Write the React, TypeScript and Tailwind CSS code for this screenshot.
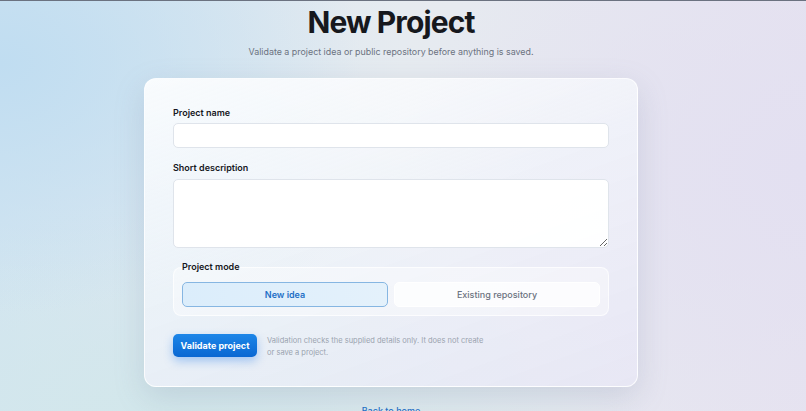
import React, { useState } from 'react';

export default function App() {
  const [mode, setMode] = useState<'idea' | 'repo'>('idea');

  return (
    <div className="min-h-screen w-full overflow-hidden border-t border-[#6b7280] font-['Inter','Noto_Sans',sans-serif] text-[#16181d] [background:radial-gradient(ellipse_45%_60%_at_0%_15%,#c0ddf1_0%,rgba(192,221,241,0)_100%),radial-gradient(ellipse_50%_70%_at_100%_40%,#e3e0f1_0%,rgba(227,224,241,0)_100%),radial-gradient(ellipse_60%_50%_at_20%_100%,#d2e7eb_0%,rgba(210,231,235,0)_100%),linear-gradient(90deg,#d3e5f1_0%,#e6ebf0_50%,#e6e3f0_100%)]">
      <div className="flex flex-col items-center pr-6 pt-[6px]">
        <h1 className="text-[30px] font-bold leading-none tracking-[-0.03em]">New Project</h1>
        <p className="mt-[9px] text-[8.9px] leading-[12px] text-[#6b7280]">
          Validate a project idea or public repository before anything is saved.
        </p>

        <form
          onSubmit={(e) => e.preventDefault()}
          className="mt-[20px] flex w-[494px] flex-col rounded-xl border border-white/80 bg-[linear-gradient(160deg,rgba(255,255,255,0.88)_0%,rgba(244,247,252,0.7)_45%,rgba(232,231,246,0.75)_100%)] px-7 pb-[27px] pt-7 shadow-[0_10px_30px_rgba(120,130,160,0.22)]"
        >
          <label className="text-[9px] font-semibold leading-[12px]">Project name</label>
          <input
            type="text"
            className="mt-[4px] h-[25px] w-full rounded-[5px] border border-[#dfe4eb] bg-white/95 px-2 text-[9px] outline-none"
          />

          <label className="mt-[14px] text-[9px] font-semibold leading-[12px]">Short description</label>
          <textarea className="mt-[5px] h-[69px] w-full rounded-[5px] border border-[#dfe4eb] bg-white/95 px-2 py-1 text-[9px] outline-none" />

          <fieldset className="mt-[13px] rounded-lg border border-white/70 bg-white/40 px-2 pb-2 pt-[9px]">
            <legend className="text-[9px] font-semibold leading-[12px]">Project mode</legend>
            <div className="grid grid-cols-2 gap-[6px]">
              <button
                type="button"
                onClick={() => setMode('idea')}
                className={
                  mode === 'idea'
                    ? 'h-[25px] rounded-[5px] border border-[#86b6e2] bg-[linear-gradient(90deg,#dbedfb,#e4f1fb)] text-[9px] font-semibold text-[#1e6fc6]'
                    : 'h-[25px] rounded-[5px] border border-white bg-white/75 text-[9px] font-medium text-[#6b7280]'
                }
              >
                New idea
              </button>
              <button
                type="button"
                onClick={() => setMode('repo')}
                className={
                  mode === 'repo'
                    ? 'h-[25px] rounded-[5px] border border-[#86b6e2] bg-[linear-gradient(90deg,#dbedfb,#e4f1fb)] text-[9px] font-semibold text-[#1e6fc6]'
                    : 'h-[25px] rounded-[5px] border border-white bg-white/75 text-[9px] font-medium text-[#6b7280]'
                }
              >
                Existing repository
              </button>
            </div>
          </fieldset>

          <div className="mt-[18px] flex items-start gap-[10px]">
            <button
              type="submit"
              className="h-[23px] w-[84px] shrink-0 rounded-[5px] bg-[linear-gradient(180deg,#1c86e8,#0a67d2)] text-[9px] font-bold text-white shadow-[0_4px_10px_rgba(26,115,232,0.35)]"
            >
              Validate project
            </button>
            <p className="mt-[1px] max-w-[222px] text-[7.5px] leading-[12px] text-[#9aa3af]">
              Validation checks the supplied details only. It does not create or save a project.
            </p>
          </div>
        </form>

        <a href="#" className="mt-[18px] text-[9px] font-medium leading-[12px] text-[#1f6fc4]">
          Back to home
        </a>
      </div>
    </div>
  );
}
